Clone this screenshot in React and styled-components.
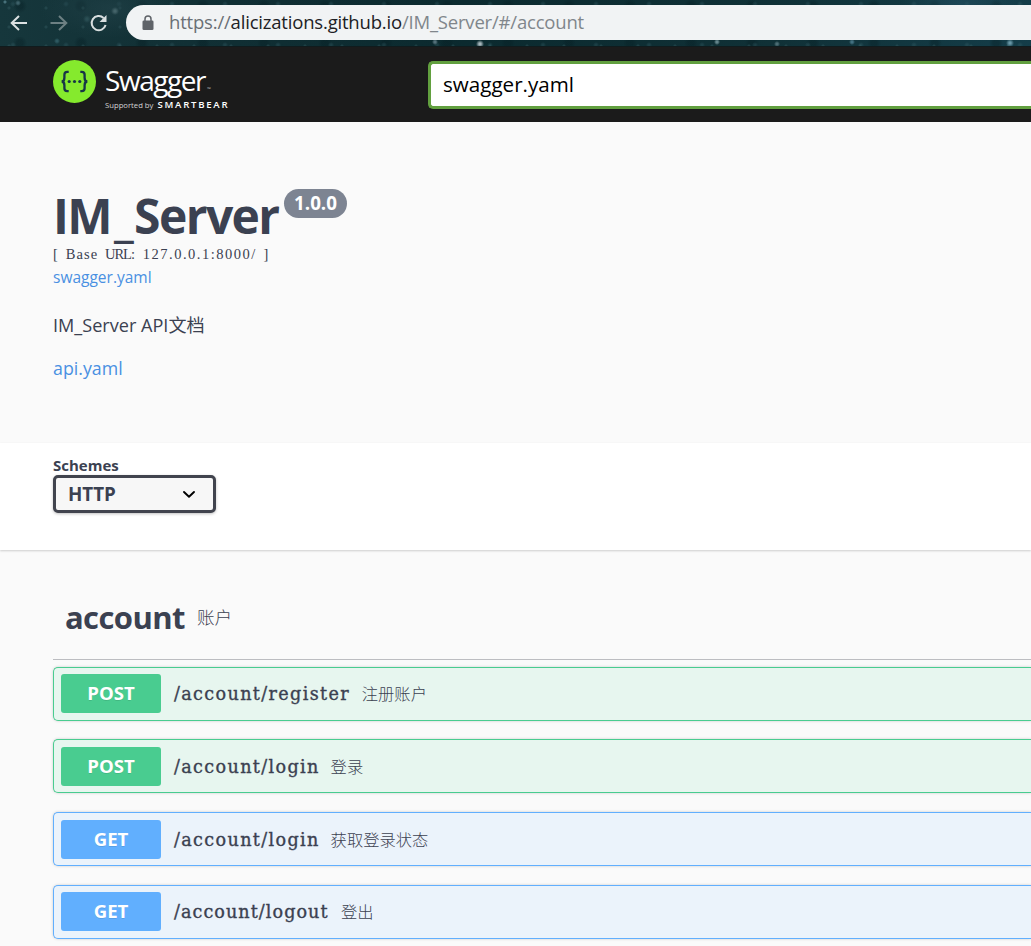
import React from "react";
import styled, { createGlobalStyle } from "styled-components";

const sans = `"Open Sans", "Noto Sans", "Noto Sans CJK SC", sans-serif`;
const ink = "#3b4151";
const methodColor = { POST: "#49cc90", GET: "#61affe" };
const methodFill = { POST: "#e7f6ef", GET: "#ebf3fb" };

const GlobalStyle = createGlobalStyle`
  * { box-sizing: border-box; }
  body { margin: 0; background: #fafafa; color: ${ink}; font-family: ${sans}; overflow: hidden; }
  h1, h2, p { margin: 0; }
  a { color: #4990e2; text-decoration: none; }
`;

const Page = styled.div`
  height: 946px;
  overflow: hidden;
`;

const BrowserBar = styled.div`
  height: 47px;
  display: flex;
  align-items: flex-start;
  padding: 5px 0 0 9px;
  overflow: hidden;
  background:
    radial-gradient(ellipse 60px 30px at 960px 5px, #24506299, transparent),
    radial-gradient(ellipse 70px 30px at 110px 8px, #23434a99, transparent),
    radial-gradient(circle at 5px 2px, #47717a 0 1px, transparent 2px),
    radial-gradient(circle at 18px 3px, #3c6068 0 1px, transparent 3px),
    radial-gradient(circle at 57px 41px, #2d5860 0 1px, transparent 3px),
    radial-gradient(circle at 87px 19px, #2c5358 0 1px, transparent 4px),
    radial-gradient(circle at 115px 11px, #67868a 0 1px, transparent 4px),
    radial-gradient(circle at 480px 44px, #a5b5bb 0 1px, transparent 4px),
    radial-gradient(circle at 435px 42px, #537079 0 1px, transparent 3px),
    radial-gradient(circle at 717px 42px, #63848b 0 1px, transparent 3px),
    radial-gradient(circle at 777px 44px, #4b6c73 0 1px, transparent 3px),
    radial-gradient(circle at 852px 42px, #427080 0 1px, transparent 3px),
    radial-gradient(circle at 1010px 43px, #6796a6 0 1px, transparent 4px),
    radial-gradient(circle at 9px 8px, #3d656b55 0 1px, transparent 2px) 0 0 / 37px 19px,
    radial-gradient(circle at 13px 4px, #36606855 0 1px, transparent 3px) 0 0 / 53px 41px,
    radial-gradient(circle at 20px 6px, #061f2466 0 3px, transparent 7px) 0 0 / 61px 37px,
    linear-gradient(90deg, #16373c, #123136 14%, #0b2a2f 45%, #103137 75%, #143d49);
  border-bottom: 1px solid #101b1d;
`;

const NavIcons = styled.div`
  height: 35px;
  display: flex;
  align-items: center;
  gap: 20px;
  width: 117px;
`;

const AddressBar = styled.div`
  flex: 1;
  height: 35px;
  display: flex;
  align-items: center;
  padding-left: 16px;
  border-radius: 18px 0 0 18px;
  background: #f1f3f4;
`;

const Address = styled.div`
  margin: -2px 0 0 15px;
  font-size: 18.5px;
  letter-spacing: -0.19px;
  line-height: 33px;
  color: #80868b;
  white-space: nowrap;
`;
const Protocol = styled.span`
  color: #6a6f75;
`;
const Host = styled.span`
  color: #202124;
`;

const Topbar = styled.header`
  height: 75px;
  display: flex;
  align-items: flex-start;
  padding: 13px 0 0 53px;
  background: #1b1b1b;
`;

const Brand = styled.div`
  display: flex;
  width: 375px;
  gap: 9px;
  color: #fff;
`;
const BrandText = styled.div`
  display: flex;
  flex-direction: column;
`;
const BrandName = styled.div`
  display: flex;
  height: 37px;
  font-size: 28px;
  line-height: 41px;
  letter-spacing: -1.45px;
`;
const Trademark = styled.span`
  margin-left: 2px;
  font-size: 5px;
  line-height: 58px;
  letter-spacing: 0;
  color: #bbb;
`;
const Support = styled.div`
  display: flex;
  gap: 4px;
  font-size: 7.7px;
  line-height: 16px;
  white-space: nowrap;
  color: #d4d4d4;
`;
const SupportBrand = styled.strong`
  font-size: 9.6px;
  letter-spacing: 1.75px;
  line-height: 15px;
  font-weight: 600;
  color: #fff;
`;

const SpecInput = styled.div`
  flex: 1;
  height: 48px;
  margin-top: 1px;
  padding-left: 12px;
  border: 3px solid #62a03f;
  border-right: 0;
  border-radius: 5px 0 0 5px;
  background: #fff;
  color: #000;
  font-size: 20.6px;
  line-height: 41px;
`;

const Info = styled.section`
  height: 321px;
  padding: 65px 0 0 53px;
  display: flex;
  flex-direction: column;
  align-items: flex-start;
`;
const TitleRow = styled.div`
  display: flex;
  align-items: flex-start;
  height: 58px;
`;
const Title = styled.h1`
  width: 231px;
  font-size: 48px;
  line-height: 58px;
  letter-spacing: -1.6px;
  font-weight: 700;
  white-space: nowrap;
`;
const Underscore = styled.span`
  margin: 0 2px 0 3px;
  line-height: 1;
  vertical-align: -2px;
`;
const Version = styled.span`
  width: 63px;
  height: 29px;
  margin-top: 2px;
  border-radius: 15px;
  background: #7d8492;
  color: #fff;
  font-size: 18.8px;
  font-weight: 700;
  line-height: 28px;
  text-align: center;
`;
const BaseUrl = styled.div`
  height: 20px;
  font-family: "Liberation Serif", serif;
  font-size: 14.5px;
  line-height: 18px;
  letter-spacing: 1.1px;
  word-spacing: 2px;
  white-space: pre;
`;
const Acronym = styled.span`
  letter-spacing: -1px;
`;
const HostAddress = styled.span`
  letter-spacing: 1.5px;
`;
const SpecLink = styled.a`
  font-size: 15.5px;
  line-height: 24px;
`;
const Description = styled.p`
  margin-top: 22px;
  font-size: 18.1px;
  line-height: 28px;
`;
const DocLink = styled.a`
  margin-top: 15px;
  font-size: 17.8px;
  line-height: 28px;
`;

const SchemeBar = styled.section`
  height: 107px;
  display: flex;
  flex-direction: column;
  padding: 13px 0 0 53px;
  background: #fff;
  box-shadow: 0 1px 2px rgba(0, 0, 0, 0.18);
`;
const SchemeLabel = styled.label`
  height: 19px;
  font-size: 15px;
  line-height: 19px;
  font-weight: 700;
`;
const SchemeSelect = styled.div`
  width: 163px;
  height: 38px;
  display: flex;
  align-items: center;
  justify-content: space-between;
  padding: 0 17px 0 12px;
  border: 3px solid #41444e;
  border-radius: 5px;
  background: #f7f7f7;
  box-shadow: 0 1px 3px rgba(0, 0, 0, 0.25);
  font-size: 18.8px;
  font-weight: 700;
`;

const Operations = styled.section`
  padding: 38px 0 0 53px;
`;
const TagHeader = styled.div`
  height: 72px;
  display: flex;
  align-items: flex-start;
  gap: 12px;
  padding-left: 12px;
  border-bottom: 1px solid #bcbdc1;
`;
const TagName = styled.h2`
  width: 120px;
  font-size: 31px;
  line-height: 59px;
  letter-spacing: -0.6px;
  font-weight: 700;
`;
const TagDescription = styled.span`
  font-size: 17.6px;
  line-height: 58px;
  font-weight: 300;
`;
const OperationList = styled.div`
  display: flex;
  flex-direction: column;
  gap: 18.6px;
  padding-top: 6.8px;
`;
const Operation = styled.div`
  height: 54px;
  display: flex;
  align-items: flex-start;
  padding: 6.55px 0 0 7px;
  border: 1px solid ${(p) => methodColor[p.$method]};
  border-right: 0;
  border-radius: 5px 0 0 5px;
  background: ${(p) => methodFill[p.$method]};
  box-shadow: 0 0 3px rgba(0, 0, 0, 0.19);
`;
const Method = styled.span`
  width: 100px;
  height: 39px;
  border-radius: 3px;
  background: ${(p) => methodColor[p.$method]};
  color: #fff;
  font-size: 18.6px;
  font-weight: 700;
  line-height: 38px;
  text-align: center;
  text-shadow: 0 1px 0 rgba(0, 0, 0, 0.1);
`;
const Path = styled.span`
  width: ${(p) => p.$chars * 10.4}px;
  margin-left: 13px;
  font-family: "DejaVu Serif", serif;
  font-size: 17.6px;
  line-height: 40px;
  letter-spacing: ${(p) => p.$tracking}px;
  white-space: nowrap;
  -webkit-text-stroke: 0.35px ${ink};
`;
const Summary = styled.span`
  margin-left: 11px;
  font-size: 16.3px;
  line-height: 40px;
  font-weight: 300;
`;

const operations = [
  { method: "POST", path: "/account/register", summary: "注册账户", tracking: 1.35 },
  { method: "POST", path: "/account/login", summary: "登录", tracking: 1.35 },
  { method: "GET", path: "/account/login", summary: "获取登录状态", tracking: 1.35 },
  { method: "GET", path: "/account/logout", summary: "登出", tracking: 1.05 },
];

const ArrowIcon = ({ color, flip }) => (
  <svg width="20" height="20" viewBox="0 0 20 20" fill="none" stroke={color} strokeWidth="2">
    <path d={flip ? "M1.5 10H17M10 3l7.3 7L10 17" : "M18 10H2.5M10 3l-7.3 7L10 17"} />
  </svg>
);
const ReloadIcon = () => (
  <svg width="20" height="20" viewBox="0 0 20 20">
    <path d="M14.6 4.9A7.1 7.1 0 1 0 16.6 12" fill="none" stroke="#d9dfe0" strokeWidth="2" />
    <path d="M17.5 2v7h-7z" fill="#d9dfe0" />
  </svg>
);
const LockIcon = () => (
  <svg width="12" height="16" viewBox="0 0 12 16">
    <rect x="0.5" y="5.5" width="11" height="9.5" rx="1.3" fill="#5f6368" />
    <path d="M3 6V4a3 3 0 0 1 6 0v2" fill="none" stroke="#5f6368" strokeWidth="1.5" />
  </svg>
);
const SwaggerMark = () => (
  <svg width="43" height="43" viewBox="0 0 43 43">
    <circle cx="21.5" cy="21.5" r="21.5" fill="#85ea2d" />
    <g fill="none" stroke="#173647" strokeWidth="2.3">
      <path d="M15.7 11.8h-1.5c-2 0-2.8 1-2.8 2.9v3.1c0 2.2-.8 3.7-2.8 3.7 2 0 2.8 1.5 2.8 3.7v3.1c0 1.9.8 2.9 2.8 2.9h1.5" />
      <path d="M27.3 11.8h1.5c2 0 2.8 1 2.8 2.9v3.1c0 2.2.8 3.7 2.8 3.7-2 0-2.8 1.5-2.8 3.7v3.1c0 1.9-.8 2.9-2.8 2.9h-1.5" />
    </g>
    <g fill="#173647">
      <circle cx="16.2" cy="21.5" r="1.6" />
      <circle cx="21.5" cy="21.5" r="1.6" />
      <circle cx="26.8" cy="21.5" r="1.6" />
    </g>
  </svg>
);
const ChevronIcon = () => (
  <svg width="14" height="10" viewBox="0 0 14 10" fill="none" stroke="#000" strokeWidth="1.9" strokeLinecap="round" strokeLinejoin="round">
    <path d="M2 3l5 4.8 5-4.8" />
  </svg>
);

export default function App() {
  return (
    <Page>
      <GlobalStyle />
      <BrowserBar>
        <NavIcons>
          <ArrowIcon color="#dce1e2" />
          <ArrowIcon color="#6d8083" flip />
          <ReloadIcon />
        </NavIcons>
        <AddressBar>
          <LockIcon />
          <Address>
            <Protocol>https://</Protocol>
            <Host>alicizations.github.io</Host>/IM_Server/#/account
          </Address>
        </AddressBar>
      </BrowserBar>
      <Topbar>
        <Brand>
          <SwaggerMark />
          <BrandText>
            <BrandName>
              Swagger<Trademark>™</Trademark>
            </BrandName>
            <Support>
              Supported by <SupportBrand>SMARTBEAR</SupportBrand>
            </Support>
          </BrandText>
        </Brand>
        <SpecInput>swagger.yaml</SpecInput>
      </Topbar>
      <Info>
        <TitleRow>
          <Title>IM<Underscore>_</Underscore>Server</Title>
          <Version>1.0.0</Version>
        </TitleRow>
        <BaseUrl>[ Base <Acronym>URL</Acronym>: <HostAddress>127.0.0.1:8000/</HostAddress> ]</BaseUrl>
        <SpecLink>swagger.yaml</SpecLink>
        <Description>IM_Server API文档</Description>
        <DocLink>api.yaml</DocLink>
      </Info>
      <SchemeBar>
        <SchemeLabel>Schemes</SchemeLabel>
        <SchemeSelect>
          HTTP
          <ChevronIcon />
        </SchemeSelect>
      </SchemeBar>
      <Operations>
        <TagHeader>
          <TagName>account</TagName>
          <TagDescription>账户</TagDescription>
        </TagHeader>
        <OperationList>
          {operations.map((op, i) => (
            <Operation key={i} $method={op.method}>
              <Method $method={op.method}>{op.method}</Method>
              <Path $chars={op.path.length} $tracking={op.tracking}>{op.path}</Path>
              <Summary>{op.summary}</Summary>
            </Operation>
          ))}
        </OperationList>
      </Operations>
    </Page>
  );
}
